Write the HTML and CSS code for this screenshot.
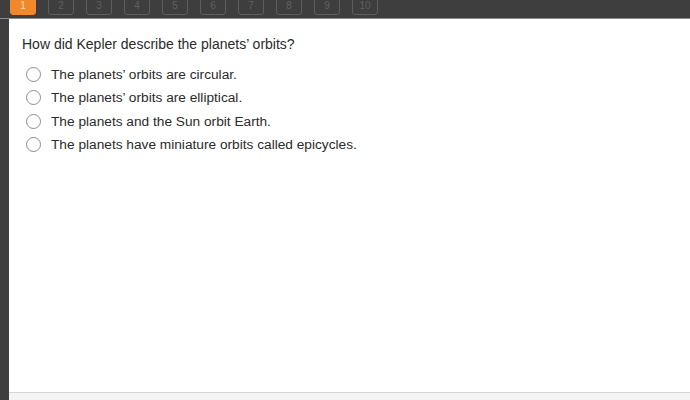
FILE: index.html
```html
<!DOCTYPE html>
<html lang="en">
<head>
    <meta charset="UTF-8">
    <meta name="viewport" content="width=device-width, initial-scale=1.0">
    <title>Question 1</title>
    <link rel="stylesheet" href="styles.css">
</head>
<body>

<div class="topbar">
    <button class="qnum active">1</button>
    <button class="qnum">2</button>
    <button class="qnum">3</button>
    <button class="qnum">4</button>
    <button class="qnum">5</button>
    <button class="qnum">6</button>
    <button class="qnum">7</button>
    <button class="qnum">8</button>
    <button class="qnum">9</button>
    <button class="qnum">10</button>
</div>

<div class="panel">
    <div class="content">
        <p class="question">How did Kepler describe the planets’ orbits?</p>
        <div class="options">
            <label class="option"><span class="radio"></span>The planets’ orbits are circular.</label>
            <label class="option"><span class="radio"></span>The planets’ orbits are elliptical.</label>
            <label class="option"><span class="radio"></span>The planets and the Sun orbit Earth.</label>
            <label class="option"><span class="radio"></span>The planets have miniature orbits called epicycles.</label>
        </div>
    </div>
    <div class="footer"></div>
</div>

</body>
</html>
```

FILE: styles.css
```css
body {
    margin: 0;
    height: 400px;
    overflow: hidden;
    background-color: #3e3e3e;
    font-family: 'Liberation Sans', Arial, sans-serif;
    display: flex;
    flex-direction: column;
}

.topbar {
    height: 18px;
    display: flex;
    align-items: flex-end;
    gap: 12px;
    padding-left: 10px;
    border-bottom: 1px solid #8a8a8a;
    overflow: hidden;
}

.qnum {
    flex: none;
    width: 26px;
    height: 26px;
    margin-bottom: 3px;
    padding: 0 0 3px;
    display: flex;
    align-items: flex-end;
    justify-content: center;
    background: transparent;
    border: 1px solid #5c5c5c;
    border-radius: 3px;
    color: #5f5f5f;
    font-family: 'Liberation Sans', Arial, sans-serif;
    font-size: 10px;
    line-height: 10px;
}

.qnum.active {
    background-color: #f0892b;
    border-color: #f0892b;
    color: #ffd9b0;
}

.panel {
    flex: 1;
    margin-left: 9px;
    background-color: #ffffff;
    display: flex;
    flex-direction: column;
}

.content {
    flex: 1;
    padding: 17px 0 0 13px;
}

.question {
    margin: 0 0 14px;
    font-size: 14px;
    line-height: 16px;
    color: #2b2b2b;
}

.options {
    display: flex;
    flex-direction: column;
    gap: 7.6px;
}

.option {
    display: flex;
    align-items: center;
    gap: 10px;
    height: 16px;
    padding-left: 4px;
    font-size: 13.7px;
    color: #2b2b2b;
}

.radio {
    width: 13px;
    height: 13px;
    border: 1.4px solid #8d8d8d;
    border-radius: 50%;
}

.footer {
    height: 7px;
    border-top: 1px solid #d6d6d6;
    background-color: #f4f4f4;
}
```
